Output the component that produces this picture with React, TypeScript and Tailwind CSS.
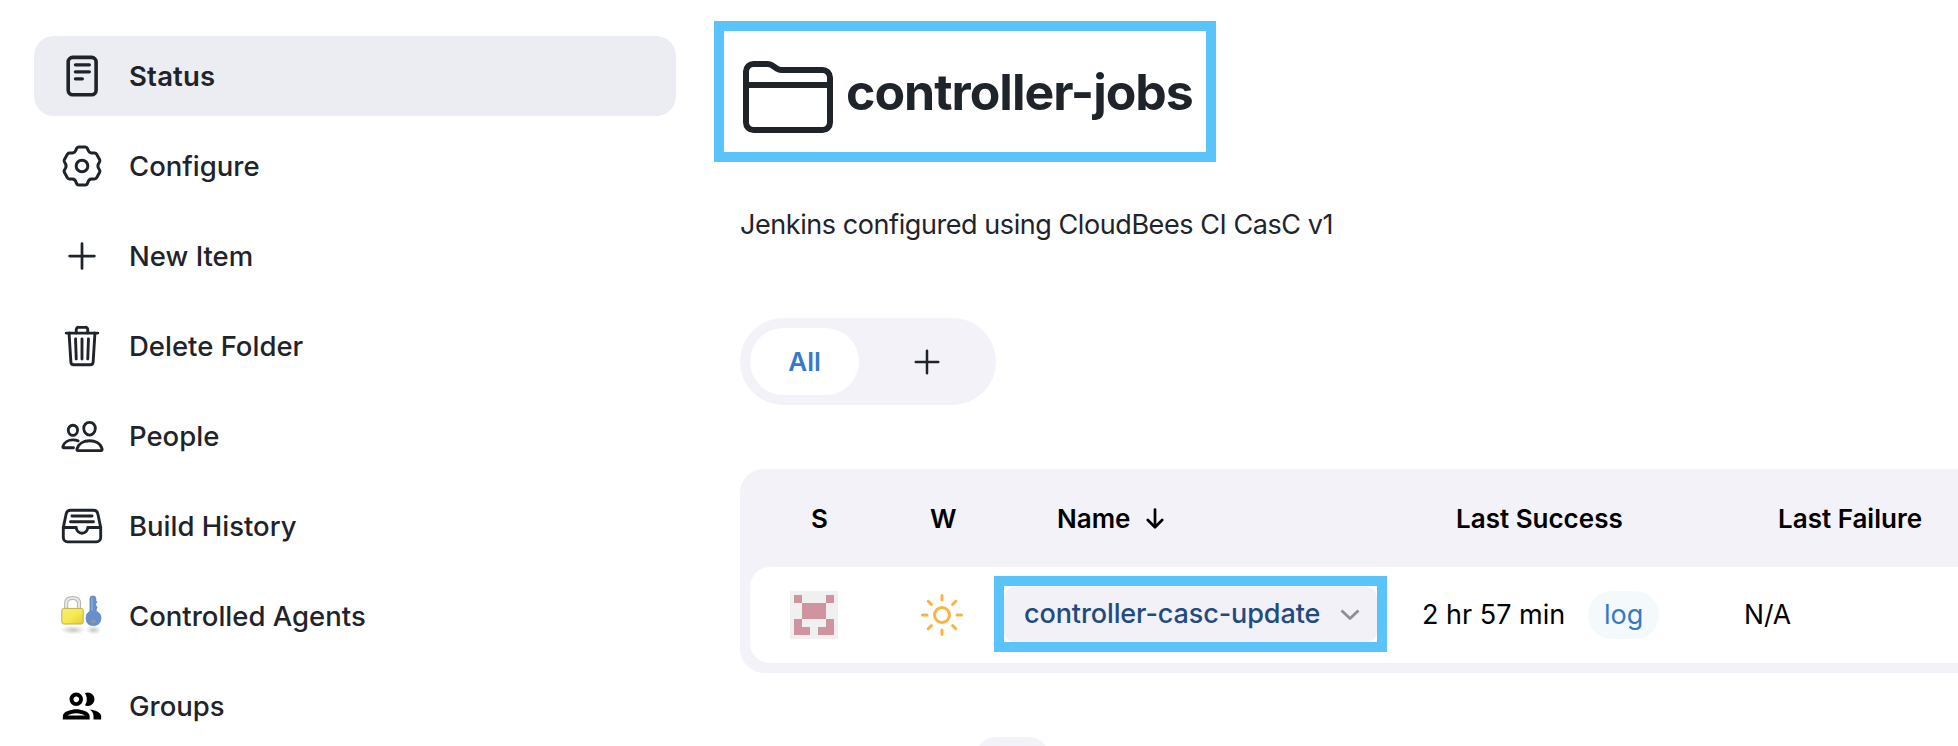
import type { ReactNode } from "react";
import {
  IoAddOutline,
  IoFileTrayFullOutline,
  IoFolderOutline,
  IoPeopleOutline,
  IoSunnyOutline,
  IoTrashOutline,
} from "react-icons/io5";

function StatusIcon() {
  return (
    <svg viewBox="0 0 46 46" className="size-[46px]" fill="none" stroke="#1f242b" strokeWidth="3.6" strokeLinecap="round">
      <rect x="9.2" y="4.4" width="27.9" height="37.3" rx="4.5" />
      <path d="M16.4 11.8H30.4M16.4 18.8H30.4M16.4 25.8H23.4" strokeWidth="3.2" />
    </svg>
  );
}

function GearIcon() {
  return (
    <svg viewBox="-69 -69 138 138" className="size-[46px]" fill="none" stroke="#1f242b" strokeWidth="9" strokeLinejoin="round">
      <path d="M-10 -57H10Q14.5 -57 16.5 -52Q20 -39 29 -39H38Q42 -39 44 -35L53 -19Q55 -15 52 -11Q43.5 0 52 11Q55 15 53 19L44 35Q42 39 38 39H29Q20 39 16.5 52Q14.5 57 10 57H-10Q-14.5 57 -16.5 52Q-20 39 -29 39H-38Q-42 39 -44 35L-53 19Q-55 15 -52 11Q-43.5 0 -52 -11Q-55 -15 -53 -19L-44 -35Q-42 -39 -38 -39H-29Q-20 -39 -16.5 -52Q-14.5 -57 -10 -57Z" />
      <circle r="17.5" />
    </svg>
  );
}

function LockKeyIcon() {
  return (
    <svg viewBox="0 0 46 46" className="size-[46px]">
      <defs>
        <linearGradient id="lock" x1="0" y1="0" x2="1" y2="1">
          <stop offset="0" stopColor="#f3ec7c" />
          <stop offset="0.5" stopColor="#f7ea4e" />
          <stop offset="1" stopColor="#e2cf3a" />
        </linearGradient>
        <radialGradient id="shade">
          <stop offset="0" stopColor="#000" stopOpacity="0.22" />
          <stop offset="1" stopColor="#000" stopOpacity="0" />
        </radialGradient>
      </defs>
      <ellipse cx="14" cy="37" rx="12.5" ry="4.5" fill="url(#shade)" />
      <ellipse cx="34.5" cy="37" rx="8" ry="4.5" fill="url(#shade)" />
      <path d="M7.2 16V10Q7.2 5 13.6 5Q20 5 20 10V16" fill="none" stroke="#b4b4b0" strokeWidth="4.2" />
      <path d="M7.2 16V10Q7.2 5 13.6 5Q20 5 20 10V16" fill="none" stroke="#e8e8e6" strokeWidth="2.2" />
      <rect x="2.8" y="15.4" width="21.4" height="15.6" rx="2" fill="url(#lock)" stroke="#c0b04a" strokeWidth="1" />
      <path d="M31 5.2Q31 3 34 3Q36.6 3 36.8 5.2V7.5L38 9L36.8 10.5V12.5L38.2 14L37.2 16V18.2Q42 20.4 42 25Q41.6 32.4 34.4 32.6Q27.2 32.4 27 25Q27.4 20 31 18.2Z" fill="#668fcb" stroke="#5a83c0" strokeWidth="0.8" />
      <path d="M33 5V17.5" stroke="#8fb0de" strokeWidth="1.4" />
      <ellipse cx="34.4" cy="28.2" rx="2.4" ry="2" fill="#8d98a3" />
    </svg>
  );
}

function GroupsIcon() {
  return (
    <svg viewBox="0 0 24 24" className="size-[46px]" fill="#000">
      <path d="M9 13.75c-2.34 0-7 1.17-7 3.5V19h14v-1.75c0-2.33-4.66-3.5-7-3.5zM4.34 17c.84-.58 2.87-1.25 4.66-1.25s3.82.67 4.66 1.25H4.34zM9 12c1.93 0 3.5-1.57 3.5-3.5S10.93 5 9 5 5.5 6.57 5.5 8.5 7.07 12 9 12zm0-5c.83 0 1.5.67 1.5 1.5S9.83 10 9 10s-1.5-.67-1.5-1.5S8.17 7 9 7zm7.04 6.81c1.16.84 1.96 1.96 1.96 3.44V19h4v-1.75c0-2.02-3.5-3.17-5.96-3.44zM15 12c1.93 0 3.5-1.57 3.5-3.5S16.93 5 15 5c-.54 0-1.04.13-1.5.35.63.89 1 1.98 1 3.15s-.37 2.26-1 3.15c.46.22.96.35 1.5.35z" />
    </svg>
  );
}

function Identicon() {
  const cells = ["10001", "01110", "01110", "10001", "11011"];
  return (
    <svg viewBox="0 0 48 48" className="size-12">
      <rect width="48" height="48" fill="#f0f0f0" />
      {cells.flatMap((row, y) =>
        row.split("").map((c, x) =>
          c === "1" ? <rect key={`${x}-${y}`} x={4 + x * 8} y={4 + y * 8} width="8" height="8" fill="#cf949f" /> : null
        )
      )}
    </svg>
  );
}

type Item = { label: string; icon: ReactNode; active?: boolean };

const items: Item[] = [
  { label: "Status", icon: <StatusIcon />, active: true },
  { label: "Configure", icon: <GearIcon /> },
  { label: "New Item", icon: <IoAddOutline className="size-11" /> },
  { label: "Delete Folder", icon: <IoTrashOutline className="size-[46px]" /> },
  { label: "People", icon: <IoPeopleOutline className="size-[45px]" /> },
  { label: "Build History", icon: <IoFileTrayFullOutline className="size-[46px]" /> },
  { label: "Controlled Agents", icon: <LockKeyIcon /> },
  { label: "Groups", icon: <GroupsIcon /> },
];

function Sidebar() {
  return (
    <nav className="flex w-[642px] shrink-0 flex-col gap-2.5 pt-9">
      {items.map((item) => (
        <a
          key={item.label}
          className={`flex h-20 shrink-0 items-center gap-6 rounded-[20px] pl-[25px] text-[27.5px] ${
            item.active ? "bg-[#ecedf3] font-semibold tracking-[0.2px]" : "font-medium"
          }`}
        >
          <span className="flex size-[46px] items-center justify-center">{item.icon}</span>
          <span className="pt-0.5 whitespace-nowrap">{item.label}</span>
        </a>
      ))}
    </nav>
  );
}

export default function App() {
  return (
    <div className="flex h-[746px] w-[1958px] overflow-hidden bg-white pl-[34px] font-['Inter',sans-serif] text-[#1f242b]">
      <Sidebar />
      <main className="ml-[38px] flex w-[1400px] shrink-0 flex-col items-start pt-[21px]">
        <div className="flex h-[141px] w-[502px] shrink-0 items-start border-[10px] border-[#5ac4fa] pt-[18px] pl-4">
          <IoFolderOutline className="size-24 shrink-0" />
          <h1 className="mt-3 ml-[10px] text-[50px] leading-[62px] font-bold tracking-[-1px] whitespace-nowrap">controller-jobs</h1>
        </div>
        <p className="mt-[45px] ml-[26px] shrink-0 text-[27px] leading-9 tracking-[-0.43px] whitespace-nowrap">
          Jenkins configured using CloudBees CI CasC v1
        </p>
        <div className="mt-[75px] ml-[26px] flex h-[87px] w-64 shrink-0 items-center rounded-full bg-[#f3f2f8] p-2.5">
          <span className="flex h-[67px] w-[109px] items-center justify-center rounded-full bg-white text-[26px] font-semibold text-[#3579c9]">
            All
          </span>
          <span className="flex flex-1 justify-center pl-2">
            <IoAddOutline className="size-10" />
          </span>
        </div>
        <section className="mt-16 ml-[26px] h-[204px] w-[1374px] shrink-0 rounded-[24px] bg-[#f3f2f8] pl-2.5 text-[26px] text-black">
          <div className="grid h-[98px] grid-cols-[124px_124px_421px_322px_1fr] items-center font-semibold whitespace-nowrap">
            <span className="pl-[61px]">S</span>
            <span className="pl-14">W</span>
            <span className="flex items-center gap-4 pl-[59px]">
              Name
              <svg viewBox="0 0 18 21" className="h-[21px] w-[18px]" fill="none" stroke="#000" strokeWidth="2.7" strokeLinecap="round" strokeLinejoin="round">
                <path d="M9 1.5V19M1.8 12L9 19.2L16.2 12" />
              </svg>
            </span>
            <span className="pl-[37px]">Last Success</span>
            <span className="pl-[37px]">Last Failure</span>
          </div>
          <div className="grid h-24 grid-cols-[124px_120px_425px_322px_1fr] items-center rounded-[20px] bg-white whitespace-nowrap">
            <span className="pl-10">
              <Identicon />
            </span>
            <span className="pl-11 text-[#f8b541]">
              <IoSunnyOutline className="size-12" />
            </span>
            <span className="-mt-0.5 flex h-[76px] w-[393px] border-[10px] border-[#5ac4fa] pt-px">
              <a className="flex h-[55px] w-full items-center rounded-[10px] bg-[#f2f1f7] pl-5 text-[27px] font-medium tracking-[-0.1px] text-[#1f4c80]">
                controller-casc-update
                <svg viewBox="0 0 20 12" className="ml-5 h-3 w-5" fill="none" stroke="#8e8e93" strokeWidth="2.8" strokeLinejoin="round">
                  <path d="M1.5 1.5L10 9.5L18.5 1.5" />
                </svg>
              </a>
            </span>
            <span className="flex items-center pl-[3px] text-[27px]">
              2 hr 57 min
              <a className="ml-[23px] flex h-12 w-[71px] items-center justify-center rounded-full bg-[#f4f9fc] text-[#3579c9]">log</a>
            </span>
            <span className="pl-[3px] text-[26.5px]">N/A</span>
          </div>
        </section>
        <div className="mt-16 ml-[262px] h-16 w-[73px] shrink-0 rounded-[20px] bg-[#f3f2f8]" />
      </main>
    </div>
  );
}
